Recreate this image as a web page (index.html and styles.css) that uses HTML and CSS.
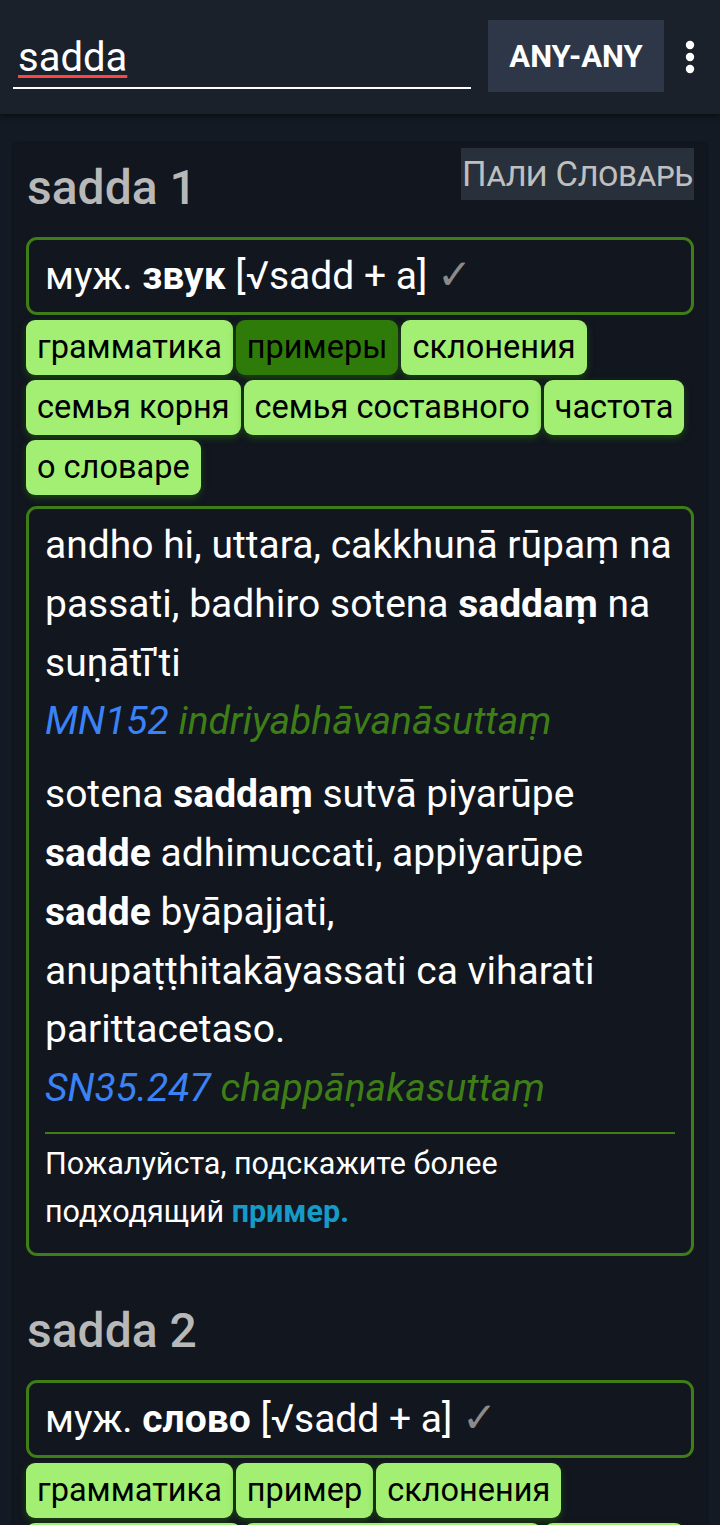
FILE: index.html
```html
<!DOCTYPE html>
<html lang="ru">
<head>
<meta charset="utf-8">
<title>sadda</title>
<link rel="stylesheet" href="styles.css">
</head>
<body>
<header class="topbar">
  <div class="search"><span class="query">sadda</span></div>
  <button class="mode">ANY-ANY</button>
  <svg class="menu" width="14" height="40" viewBox="0 0 14 40" aria-hidden="true">
    <circle cx="7" cy="8" r="4.2" fill="#fff"/>
    <circle cx="7" cy="20" r="4.2" fill="#fff"/>
    <circle cx="7" cy="32" r="4.2" fill="#fff"/>
  </svg>
</header>
<main class="page">
  <section class="card">
    <article class="entry">
      <div class="entry-head">
        <h2 class="headword">sadda 1</h2>
        <span class="dict-tag">Пали Словарь</span>
      </div>
      <div class="def">муж. <b>звук</b> [√sadd + a] <span class="check">✓</span></div>
      <nav class="tabs">
        <span class="tab">грамматика</span>
        <span class="tab active">примеры</span>
        <span class="tab">склонения</span>
        <span class="tab">семья корня</span>
        <span class="tab">семья составного</span>
        <span class="tab">частота</span>
        <span class="tab">о словаре</span>
      </nav>
      <div class="examples">
        <p class="example">andho hi, uttara, cakkhunā rūpaṃ na passati, badhiro sotena <b>saddaṃ</b> na suṇātī'ti<br><span class="ref">MN152</span> <span class="sutta">indriyabhāvanāsuttaṃ</span></p>
        <p class="example">sotena <b>saddaṃ</b> sutvā piyarūpe <b>sadde</b> adhimuccati, appiyarūpe <b>sadde</b> byāpajjati, anupaṭṭhitakāyassati ca viharati parittacetaso.<br><span class="ref">SN35.247</span> <span class="sutta">chappāṇakasuttaṃ</span></p>
        <hr class="sep">
        <p class="feedback">Пожалуйста, подскажите более подходящий <b class="link">пример.</b></p>
      </div>
    </article>
    <article class="entry">
      <div class="entry-head">
        <h2 class="headword second">sadda 2</h2>
      </div>
      <div class="def">муж. <b>слово</b> [√sadd + a] <span class="check">✓</span></div>
      <nav class="tabs">
        <span class="tab">грамматика</span>
        <span class="tab">пример</span>
        <span class="tab">склонения</span>
        <span class="tab">семья корня</span>
        <span class="tab">семья составного</span>
        <span class="tab">частота</span>
      </nav>
    </article>
  </section>
</main>
</body>
</html>
```

FILE: styles.css
```css
* { box-sizing: border-box; }
html, body {
  margin: 0;
  padding: 0;
  background: #141a23;
  font-family: Roboto, "Noto Sans", sans-serif;
  color: #fff;
  overflow: hidden;
  height: 1525px;
}
.topbar {
  height: 114px;
  background: #1b212b;
  display: flex;
  align-items: flex-start;
  padding: 20px 0 0 13px;
  box-shadow: 0 2px 6px rgba(0,0,0,0.5);
  position: relative;
  z-index: 2;
}
.search {
  width: 458px;
  height: 69px;
  border-bottom: 2px solid #fff;
  padding: 14px 0 0 5px;
  font-size: 40px;
  line-height: 47px;
}
.query {
  text-decoration: underline;
  text-decoration-color: #f44;
  text-decoration-thickness: 3px;
  text-underline-offset: 4px;
}
.mode {
  margin-left: 17px;
  width: 176px;
  height: 72px;
  background: #2d3748;
  border: 0;
  color: #fff;
  font-family: Roboto, sans-serif;
  font-weight: bold;
  font-size: 31px;
  padding: 0;
}
.menu {
  margin: 17px 0 0 19px;
}
.page {
  padding: 29px 13px 0 13px;
}
.card {
  background: #11161f;
  border-radius: 5px;
  box-shadow: 0 0 3px rgba(0,0,0,0.6);
  padding: 5px 13px 20px 13px;
  min-height: 1400px;
}
.entry-head {
  display: flex;
  justify-content: space-between;
  align-items: flex-start;
}
.headword {
  margin: 10px 0 0 1px;
  font-size: 48px;
  font-weight: 500;
  color: #b8b8b8;
  line-height: 60px;
}
.headword.second {
  margin-top: 45px;
}
.dict-tag {
  background: #28303c;
  color: #bfbfbf;
  font-variant: small-caps;
  font-size: 34.5px;
  line-height: 52px;
  padding: 0 1px;
  white-space: nowrap;
  letter-spacing: -0.2px;
}
.def {
  margin-top: 19px;
  border: 3px solid #3f7e16;
  border-radius: 11px;
  padding: 8px 16px;
  font-size: 39px;
  line-height: 56px;
  white-space: nowrap;
  height: 78px;
}
.def b { font-weight: bold; }
.check {
  color: #8a8a8a;
  font-family: "DejaVu Sans", sans-serif;
  font-size: 42px;
  line-height: 40px;
}
.tabs {
  display: flex;
  flex-wrap: wrap;
  gap: 5px 3px;
  margin-top: 5px;
}
.tab {
  background: #a2ef73;
  color: #000;
  border-radius: 9px;
  font-size: 32.5px;
  line-height: 55px;
  height: 55px;
  padding: 0 11px;
  white-space: nowrap;
  box-shadow: 0 3px 7px rgba(40,110,10,0.55);
}
.tab.active {
  background: #2e7b0a;
}
.examples {
  margin-top: 11px;
  border: 3px solid #3f7e16;
  border-radius: 11px;
  padding: 7px 16px 17px 16px;
}
.example {
  margin: 0 0 14px 0;
  font-size: 39px;
  line-height: 58.8px;
}
.example b { font-weight: bold; }
.ref {
  color: #3b82f6;
  font-style: italic;
}
.sutta {
  color: #3f7e16;
  font-style: italic;
}
.sep {
  border: 0;
  border-top: 2px solid #3f7e16;
  margin: 5px 0 6px 0;
}
.feedback {
  margin: 0;
  font-size: 30.5px;
  line-height: 48px;
}
.link {
  color: #169ac6;
}
```
